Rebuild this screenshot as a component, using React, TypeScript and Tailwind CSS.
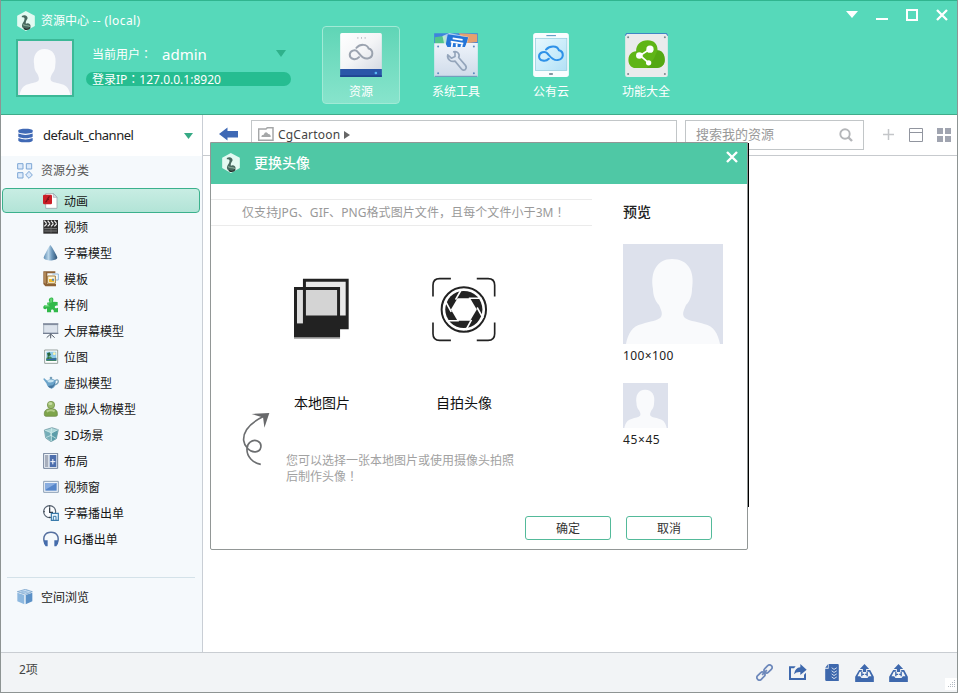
import React from "react";

type IconProps = { className?: string };

const CLOUD = "M139 98C150 86 171 85 176 100C191 104 192 127 173 130C158 133 151 119 143 110C136 101 119 106 119 119C119 133 138 136 147 126";

function Silhouette({ className }: IconProps) {
  return (
    <svg viewBox="0 0 100 100" className={className}>
      <rect width="100" height="100" fill="#dde1ec" />
      <path fill="#f9fafc" d="M3 100C5 90 9 82 19 80C27 77 35 77 38 73C40 69 38 66 36 61C32 57 30 51 30 45C27 28 34 15 49 15C65 15 72 27 69 45C69 51 67 57 63 61C61 66 59 69 61 73C64 77 73 77 81 80C91 82 95 90 97 100Z" />
    </svg>
  );
}

function Logo({ className }: IconProps) {
  return (
    <svg viewBox="0 0 57 60" className={className}>
      <path fill="#e3faf2" d="M28 0L55 14V45L28 60L2 45V14Z" />
      <path fill="#47695f" d="M16 15C23 10 35 13 33 23C29 28 27 32 28 38C34 34 44 38 42 47C39 56 22 57 17 48C14 38 24 33 24 24C25 20 21 19 16 19Z" />
      <path d="M20 40C25 47 33 41 40 47" stroke="#7fa391" strokeWidth="4" fill="none" />
      <path d="M22 52C30 57 37 55 41 49" stroke="#26312f" strokeWidth="4" fill="none" />
    </svg>
  );
}

/** Full-width punctuation centred in its cell. */
function Mark({ children }: { children: string }) {
  return <span className="font-['Noto_Sans_CJK_TC',sans-serif] leading-[0]">{children}</span>;
}

function DriveIcon() {
  return (
    <svg viewBox="90 53 126 133" className="h-[44px] w-[42px]">
      <defs><linearGradient id="drive" x2="1" y2="1"><stop stopColor="#fff" /><stop offset=".5" stopColor="#f4f5f7" /><stop offset="1" stopColor="#d5dae2" /></linearGradient></defs>
      <rect x="90" y="53" width="126" height="112" rx="5" fill="url(#drive)" />
      <path fill="#2a56a8" d="M90 162H216V183Q216 186 212 186H94Q90 186 90 183Z" />
      <path fill="#1f4591" d="M90 181H216V186H90Z" />
      <path d={CLOUD} stroke="#9ba3af" strokeWidth="6" fill="none" strokeLinecap="round" />
      <circle cx="198" cy="174" r="4" fill="#59b9f6" />
      <path d="M142 68h3m8 0h3m8 0h3" stroke="#8b9099" strokeWidth="3" />
    </svg>
  );
}

function ToolsIcon() {
  return (
    <svg viewBox="372 53 132 133" className="h-[44px] w-[44px]">
      <defs><linearGradient id="tool" x2="0" y2="1"><stop stopColor="#eef3fa" /><stop offset="1" stopColor="#cfdbea" /></linearGradient></defs>
      <path fill="#3f83dd" d="M372 54H504V95H372Z" />
      <path fill="#53c58c" d="M374 66L406 61L412 90H374Z" />
      <path fill="#e6a06f" d="M446 54L502 57V80L470 84Z" />
      <path fill="#fff" d="M397 62L418 53L476 65L468 99H405Z" opacity=".6" />
      <path fill="#2475d8" d="M413 57L475 66L466 98H405Z" />
      <path d="M428 69L458 74M422 79L460 85M425 96L427 81M440 97V83M454 98L456 86" stroke="#fff" strokeWidth="5.500" />
      <path fill="url(#tool)" d="M372 84H406L412 95H465L470 83H504V183Q504 186 501 186H375Q372 186 372 183Z" />
      <path d="M374 184H502" stroke="#5f91b2" strokeWidth="3" />
      <path d="M431 110C442 107 451 117 446 127L466 150C474 161 462 171 454 161L435 138C423 142 410 132 413 119L424 129L435 124V112Z" fill="none" stroke="#94a5bb" strokeWidth="5" strokeLinejoin="round" />
      <g fill="#5b8bbd"><circle cx="384" cy="94" r="3" /><circle cx="492" cy="94" r="3" /><circle cx="384" cy="175" r="3" /><circle cx="492" cy="175" r="3" /></g>
    </svg>
  );
}

function TabletIcon() {
  return (
    <svg viewBox="69 53 108 133" className="h-[44px] w-[36px]">
      <defs><linearGradient id="tablet" x2="1" y2="1"><stop stopColor="#e8f8fe" /><stop offset=".6" stopColor="#c7ebfa" /><stop offset="1" stopColor="#b2e0f6" /></linearGradient></defs>
      <rect x="69" y="53" width="108" height="133" rx="8" fill="#fafdff" />
      <rect x="76" y="69" width="95" height="97" fill="url(#tablet)" stroke="#8ac8da" strokeWidth="2" />
      <path d="M109 61H138" stroke="#4c90bd" strokeWidth="3" />
      <rect x="117" y="174" width="12" height="6" rx="2" fill="#8297a2" />
      <path transform="translate(-38 6) scale(1.05 .99)" d={CLOUD} stroke="#2f92e8" strokeWidth="6" fill="none" strokeLinecap="round" />
    </svg>
  );
}

function FunctionsIcon() {
  return (
    <svg viewBox="345 53 129 133" className="h-[44px] w-[43px]">
      <rect x="345" y="55" width="129" height="131" rx="6" fill="#eaebec" />
      <path d="M346 61Q346 54 353 54H466Q473 54 473 61" stroke="#3272c5" strokeWidth="3" fill="none" />
      <path fill="#5fb516" d="M377 159C361 158 354 146 355 132C356 118 364 110 378 108C378 88 392 75 413 75C433 75 443 87 443 105C456 105 465 117 465 134C465 149 456 158 442 159Z" />
      <path fill="#47980a" opacity=".45" d="M443 105C456 105 465 117 465 134C465 149 456 158 442 159H410L432 130Z" />
      <path d="M419 102L390 121L416 143" stroke="#fff" strokeWidth="5" fill="none" />
      <g fill="#fff"><circle cx="420" cy="102" r="11" /><circle cx="388" cy="121" r="10" /><circle cx="416" cy="143" r="8" /></g>
      <g fill="#7a858c"><circle cx="354" cy="66" r="3" /><circle cx="465" cy="66" r="3" /><circle cx="354" cy="177" r="3" /><circle cx="465" cy="177" r="3" /></g>
    </svg>
  );
}

const icons: Record<string, React.ReactNode> = {
  flash: (
    <>
      <path fill="#fff" stroke="#9aa8ae" strokeWidth="2.500" d="M8 2H32L42 12V46H8Z" />
      <path fill="#dbe2e6" stroke="#9aa8ae" strokeWidth="2" d="M31 2V13H42Z" />
      <rect y="5" width="27" height="29" rx="4" fill="#cb1e26" />
      <path d="M20 11C13 11 14 27 7 27M11 19H18" stroke="#7b1218" strokeWidth="4" fill="none" />
    </>
  ),
  video: (
    <>
      <path fill="#303030" d="M1 3H45V44H1Z" />
      <path d="M4 5L11 14M14 5L21 14M24 5L31 14M34 5L41 14M11 15L4 22M21 15L14 22M31 15L24 22M41 15L34 22" stroke="#f0f0f0" strokeWidth="3.500" />
      <path d="M4 29H42M4 36H42" stroke="#a3a3a3" strokeWidth="2" />
      <path d="M24 24V41" stroke="#777" strokeWidth="2" />
    </>
  ),
  cone: (
    <>
      <defs><linearGradient id="cone"><stop stopColor="#5e8db4" /><stop offset=".35" stopColor="#b9d5e8" /><stop offset=".6" stopColor="#6c98bc" /><stop offset="1" stopColor="#2e5274" /></linearGradient></defs>
      <path fill="url(#cone)" d="M22 0C25 2 43 34 43 38C40 49 5 49 2 38C2 34 19 2 22 0Z" />
    </>
  ),
  template: (
    <>
      <path fill="#8c6237" d="M1 1H37V7H13V39H39V46H7L1 39Z" />
      <path fill="#c39a66" d="M4 4H8V38L4 35Z" />
      <path fill="#fff7db" stroke="#a57d39" strokeWidth="3" d="M14 15H37V37H14Z" />
      <path fill="#f0bb2d" d="M18 24H33V33H18Z" />
      <path fill="none" stroke="#91b7d8" strokeWidth="3" d="M28 9H46V27H39" />
      <path fill="#5588bd" d="M27 23h6v6h-6z" />
    </>
  ),
  puzzle: (
    <>
      <path fill="#31b94a" d="M18 12C14 0 33 -3 31 9L30 14L44 15V26C35 22 32 34 40 34L45 32V46H32C35 37 24 35 24 42L25 46H12V34C4 42 -3 31 3 26C7 23 11 27 14 26L12 17L20 16Z" />
      <path fill="#7fe28b" opacity=".65" d="M21 6Q25 1 28 6L27 16L16 20L20 29Q15 28 4 30Q12 22 17 25L14 19L22 17Z" />
    </>
  ),
  screen: (
    <>
      <path fill="#dce3ec" stroke="#8490a0" strokeWidth="2" d="M2 5H44V31H2Z" />
      <path fill="#747f92" d="M0 1H46V5H0ZM0 29H46V33H0Z" />
      <path d="M23 32V46M22 34L11 44M24 34L35 44" stroke="#535d6a" strokeWidth="3" />
    </>
  ),
  image: (
    <>
      <path fill="#fff" stroke="#84928b" strokeWidth="2.500" d="M5 3H44V43H5Z" />
      <path fill="#8fcae8" d="M10 8H40V36H10Z" />
      <path fill="#479053" d="M10 27L21 22L29 28L40 26V36H10Z" />
      <path fill="#3569a5" d="M10 30L40 27V34H10Z" />
      <path fill="#28653b" d="M12 13L20 10L24 18L17 22V30H14V20Z" />
      <circle cx="34" cy="14" r="4" fill="#fff5ae" />
    </>
  ),
  teapot: (
    <>
      <path fill="none" stroke="#7ba2b8" strokeWidth="4" d="M36 17C48 8 51 26 34 30" />
      <path fill="#6ba4ca" d="M13 17C20 10 32 10 38 17C37 31 36 38 25 41C16 38 13 34 10 25L1 13L3 9L9 14Z" />
      <path fill="#c6e4f1" d="M13 18Q23 10 34 17Q30 24 16 22Z" />
      <path fill="#46769e" d="M30 31Q36 24 37 19Q37 32 26 40Q17 38 15 33Z" />
      <circle cx="24" cy="9" r="4" fill="#779fb8" />
    </>
  ),
  person: (
    <>
      <path fill="#7da44b" stroke="#617f3a" strokeWidth="2" d="M4 37C4 27 13 23 24 23C35 23 43 27 43 37V43Q42 46 38 46H8Q4 45 4 41Z" />
      <circle cx="24" cy="12" r="11" fill="#98ba6a" stroke="#69863e" strokeWidth="2" />
      <path d="M11 32Q23 24 35 31" stroke="#b3cc8a" strokeWidth="6" fill="none" />
      <ellipse cx="22" cy="8" rx="6" ry="4" fill="#c7dda4" />
    </>
  ),
  scene: (
    <>
      <path fill="#add8da" stroke="#5b8994" strokeWidth="2" d="M4 9L27 2L46 8L40 35L24 44L8 33Z" />
      <path fill="#5b9da9" d="M26 18L45 8L40 35L25 43Z" />
      <path fill="#75aeb8" d="M5 10L25 18V42L9 32Z" />
      <path d="M5 9L26 18L45 8M25 18V43M8 32L24 25L39 34M26 3L23 25" stroke="#d9f1f0" strokeWidth="2" fill="none" />
    </>
  ),
  layout: (
    <>
      <path fill="#eff5fa" stroke="#546784" strokeWidth="2.500" d="M2 1H44V46H2Z" />
      <path fill="#a7afbd" d="M6 6H16V42H6Z" />
      <path fill="#4d6fad" d="M20 6H40V42H20Z" />
      <path d="M22 26H37M29.500 18V34" stroke="#fff" strokeWidth="3" />
    </>
  ),
  window: (
    <>
      <path fill="#eef4fa" stroke="#8ca0b6" strokeWidth="3" d="M2 7H46V40H2Z" />
      <path fill="#5586ca" d="M7 12H41V35H7Z" />
      <path fill="#88ade0" d="M7 12H41L7 32Z" />
    </>
  ),
  clock: (
    <>
      <circle cx="20" cy="20" r="18" fill="#fbfdff" stroke="#566270" strokeWidth="3.500" />
      <path d="M20 7V22H30M20 2V5M2 20H5M20 38V35" stroke="#28323c" strokeWidth="3.500" fill="none" />
      <path fill="#e8f4fc" stroke="#397bac" strokeWidth="3.500" d="M25 25H46V46H25Z" />
      <path fill="none" stroke="#397bac" strokeWidth="3" d="M31 45V34H39V45" />
    </>
  ),
  phones: (
    <>
      <path fill="none" stroke="#56709f" strokeWidth="4.500" d="M5 36C-2 18 6 4 24 4C42 4 50 18 43 36" />
      <path fill="#456dac" d="M3 28H14V46H8L3 38ZM45 28H34V46H40L45 38Z" />
    </>
  ),
};

const items: [string, string][] = [
  ["flash", "动画"], ["video", "视频"], ["cone", "字幕模型"], ["template", "模板"],
  ["puzzle", "样例"], ["screen", "大屏幕模型"], ["image", "位图"], ["teapot", "虚拟模型"],
  ["person", "虚拟人物模型"], ["scene", "3D场景"], ["layout", "布局"], ["window", "视频窗"],
  ["clock", "字幕播出单"], ["phones", "HG播出单"],
];

function NavButton({ label, active, children }: { label: string; active?: boolean; children: React.ReactNode }) {
  return (
    <button className={`flex h-[78px] w-[78px] flex-col items-center rounded-[4px] border pt-[6px] ${active ? "border-[#a1ead6] bg-linear-to-b from-[#5fd5b6] to-[#87e4cc]" : "border-transparent"}`}>
      {children}
      <span className="mt-[7px] leading-[16px] text-white">{label}</span>
    </button>
  );
}

function Header() {
  return (
    <header className="flex h-[115px] shrink-0 border-t border-b border-t-[#30b58f] border-b-[#3fac8a] bg-[#56d9ba] text-white">
      <div className="flex w-[321px] shrink-0 flex-col pl-[15px]">
        <div className="mt-[9px] flex h-[21px] items-center">
          <Logo className="h-[20px] w-[20px]" />
          <span className="ml-[5px] leading-[20px]">资源中心<span className="tracking-[0.4px]"> -- (local)</span></span>
        </div>
        <div className="mt-[8px] flex">
          <Silhouette className="h-[58px] w-[58px] border-2 border-[#3cb897]" />
          <div className="ml-[12px] flex w-[205px] flex-col">
            <div className="flex h-[31px] items-center pl-[6px]">
              <span className="pt-px">当前用户<Mark>：</Mark></span>
              <span className="ml-[10px] text-[15px]">admin</span>
              <svg viewBox="0 0 10 7" className="mr-[5px] mb-[2px] ml-auto h-[7px] w-[10px]"><path fill="#2fb18b" d="M0 0H10L5 7Z" /></svg>
            </div>
            <div className="mt-[2px] h-[14px] rounded-full bg-[#26bd91] pl-[6px] leading-[15px]">登录IP<Mark>：</Mark>127.0.0.1:8920</div>
          </div>
        </div>
      </div>
      <nav className="mt-[25px] flex gap-[17px]">
        <NavButton label="资源" active><DriveIcon /></NavButton>
        <NavButton label="系统工具"><ToolsIcon /></NavButton>
        <NavButton label="公有云"><TabletIcon /></NavButton>
        <NavButton label="功能大全"><FunctionsIcon /></NavButton>
      </nav>
      <div className="mt-[8px] mr-[9px] ml-auto flex h-[13px] gap-[18px]">
        <svg viewBox="0 0 12 13" className="h-[13px] w-[12px]"><path fill="#fff" d="M0 2H12L6 9Z" /></svg>
        <svg viewBox="0 0 12 13" className="h-[13px] w-[12px]"><path fill="#fff" d="M0 9H12V11H0Z" /></svg>
        <svg viewBox="0 0 12 13" className="h-[13px] w-[12px]"><path fill="none" stroke="#fff" strokeWidth="2" d="M1 1H11V11H1Z" /></svg>
        <svg viewBox="0 0 12 13" className="h-[13px] w-[12px]"><path fill="none" stroke="#fff" strokeWidth="2.300" d="M1 1L11 11M11 1L1 11" /></svg>
      </div>
    </header>
  );
}

function Sidebar() {
  return (
    <aside className="flex w-[202px] shrink-0 flex-col border-r border-[#c9ced5] bg-[#f5f9fc]">
      <div className="flex h-[41px] items-center bg-white pr-[9px] pl-[17px]">
        <svg viewBox="0 0 46 44" className="h-[15px] w-[15px]" fill="#4069b5">
          <path d="M1 7C1 -1 45 -1 45 7V12C36 18 10 18 1 12Z" />
          <path d="M1 16Q23 25 45 16V26C36 32 10 32 1 26Z" />
          <path d="M1 30Q23 39 45 30V37C44 45 2 45 1 37Z" />
        </svg>
        <span className="ml-[10px] text-[13px] tracking-[-0.45px] text-[#222]">default_channel</span>
        <svg viewBox="0 0 9 6" className="ml-auto h-[6px] w-[9px]"><path fill="#36aa85" d="M0 0H9L4.500 6Z" /></svg>
      </div>
      <div className="flex h-[29px] items-center pl-[16px]">
        <svg viewBox="0 0 48 48" className="h-[16px] w-[16px]" fill="#dceafa" stroke="#7da6d5" strokeWidth="3">
          <path d="M2 2H18V18H2ZM28 2H44V18H28ZM2 29H18V45H2ZM36 25L46 36L36 46L26 36Z" />
        </svg>
        <span className="ml-[8px] text-[#555]">资源分类</span>
      </div>
      <ul className="mt-[3px]">
        {items.map(([icon, label], i) => (
          <li key={icon} className={`mr-[2px] mb-[1px] ml-[1px] flex h-[25px] items-center rounded-[4px] border pl-[40px] ${i === 0 ? "border-[#3bb18c] bg-linear-to-b from-[#c8ede3] to-[#b2e4d7]" : "border-transparent"}`}>
            <svg viewBox="0 0 48 48" className="h-[16px] w-[16px]">{icons[icon]}</svg>
            <span className="ml-[5px] pt-[2px] text-[#161616]">{label}</span>
          </li>
        ))}
      </ul>
      <div className="mt-[25px] mr-[7px] ml-[6px] h-px bg-[#d4e2e9]" />
      <div className="mt-[8px] flex h-[22px] items-center pl-[16px]">
        <svg viewBox="0 0 48 48" className="h-[16px] w-[16px]">
          <path fill="#c8dff3" stroke="#6796c3" strokeWidth="2" d="M1 8L25 1L46 8L26 16Z" />
          <path fill="#8db8df" d="M1 11L22 18V46L1 37Z" />
          <path fill="#5b91c7" d="M46 11L26 18V46L46 37Z" />
          <path d="M12 6L36 13M36 4L12 12" stroke="#8db4da" strokeWidth="2" />
        </svg>
        <span className="ml-[8px] pt-[2px] text-[#222]">空间浏览</span>
      </div>
    </aside>
  );
}

function Toolbar() {
  return (
    <div className="flex h-[41px] border-b border-[#c7cace] pt-[5px]">
      <svg viewBox="0 0 56 40" className="mt-[7px] ml-[16px] h-[14px] w-[19px]"><path fill="#3f69b5" d="M0 20L25 1V11H56V30H25V39Z" /></svg>
      <div className="ml-[13px] flex h-[30px] w-[426px] items-center border border-[#c2c6c8] pl-[6px]">
        <svg viewBox="0 0 48 42" className="mb-[2px] h-[14px] w-[16px]">
          <path fill="none" stroke="#a5a7a8" strokeWidth="4.500" d="M2 6H24L28 2H45V40H2Z" />
          <path fill="#a5a7a8" d="M10 30Q10 23 17 23Q23 10 31 21Q39 22 38 30Z" />
        </svg>
        <span className="ml-[4px] text-[12px] tracking-[0.2px] text-[#444]">CgCartoon</span>
        <svg viewBox="0 0 6 8" className="ml-[4px] h-[8px] w-[6px]"><path fill="#666" d="M0 0L6 4L0 8Z" /></svg>
      </div>
      <div className="ml-[8px] flex h-[30px] w-[179px] items-center justify-between border border-[#c2c6c8] pr-[10px] pl-[10px]">
        <span className="text-[13px] text-[#999]">搜索我的资源</span>
        <svg viewBox="0 0 14 14" className="mb-px h-[14px] w-[14px]" fill="none" stroke="#b4b6b9"><circle cx="6" cy="6" r="4.700" strokeWidth="1.900" /><path d="M9.500 9.500L13 13" strokeWidth="2.400" /></svg>
      </div>
      <svg viewBox="0 0 11 11" className="mt-[9px] ml-[19px] h-[11px] w-[11px]"><path d="M5.500 0V11M0 5.500H11" stroke="#c4c6c9" strokeWidth="1.500" /></svg>
      <svg viewBox="0 0 14 14" className="mt-[8px] ml-[15px] h-[14px] w-[14px]"><path fill="none" stroke="#91959f" d="M.5.5H13.500V13.500H.5ZM1 4.500H13" /></svg>
      <svg viewBox="0 0 14 14" className="mt-[8px] ml-[14px] h-[14px] w-[14px]"><path fill="#a0a4b0" d="M0 0H6V6H0ZM8 0H14V6H8ZM0 8H6V14H0ZM8 8H14V14H8Z" /></svg>
    </div>
  );
}

function PhotosIcon() {
  return (
    <svg viewBox="192 56 166 182" className="mr-px mb-[2px] h-[61px] w-[55px]">
      <path fill="#222" d="M219 57H357V210H219Z" />
      <path fill="#e9e9e9" d="M228 66H348V168H228Z" />
      <path fill="#999" d="M192 234H331V238H192Z" />
      <path fill="#222" d="M192 82H331V234H192Z" />
      <path fill="#dedede" d="M201 91H219V192H201Z" />
      <path fill="#d4d4d4" d="M228 91H322V168H228Z" />
    </svg>
  );
}

function ApertureIcon() {
  return (
    <svg viewBox="606 50 193 194" className="h-[65px] w-[64px]">
      <g fill="none" stroke="#222" strokeWidth="5">
        <path d="M609 108V74Q609 54 629 54H663M741 54H775Q795 54 795 74V108M795 186V220Q795 240 775 240H741M663 240H629Q609 240 609 220V186" />
        <circle cx="702" cy="147" r="67" strokeWidth="6" />
      </g>
      <circle cx="702" cy="147" r="56" fill="#222" />
      <path fill="#fff" d="M683 113H721L741 147L721 181H683L663 147Z" />
      <path d="M677 117L695 86M717 113H755M742 141L760 173M725 178L708 209M687 181H649M664 154L646 121" stroke="#fff" strokeWidth="5" />
    </svg>
  );
}

function Dialog() {
  return (
    <section className="absolute top-[142px] left-[210px] flex h-[408px] w-[538px] flex-col rounded-b-[2px] border border-[#929796] bg-white">
      <div className="absolute top-0 -right-[2px] h-[364px] w-px bg-black" />
      <div className="flex h-[41px] shrink-0 items-start bg-[#4fc8a5] pl-[10px]">
        <Logo className="mt-[10px] h-[20px] w-[20px]" />
        <span className="mt-[9px] ml-[13px] text-[14px] leading-[22px] font-medium text-white">更换头像</span>
        <svg viewBox="0 0 12 12" className="mt-[8px] mr-[9px] ml-auto h-[12px] w-[12px]"><path stroke="#fff" strokeWidth="2.400" d="M1 1L11 11M11 1L1 11" /></svg>
      </div>
      <div className="flex h-[324px]">
        <div className="flex w-[381px] flex-col">
          <div className="mt-[15px] flex h-[27px] items-center border-y border-[#ebebeb] pl-[31px] tracking-[0.08px] text-[#999]"><span>仅支持JPG、GIF、PNG格式图片文件，且每个文件小于3M<Mark>！</Mark></span></div>
          <div className="mt-[51px] ml-[40px] flex">
            <div className="flex w-[142px] flex-col items-center"><div className="flex h-[65px] items-center"><PhotosIcon /></div><span className="mt-[50px] text-[14px] leading-[22px] text-[#111]">本地图片</span></div>
            <div className="flex w-[142px] flex-col items-center"><ApertureIcon /><span className="mt-[50px] text-[14px] leading-[22px] text-[#111]">自拍头像</span></div>
          </div>
          <div className="flex">
            <svg viewBox="35 457 85 162" className="mt-[-2px] ml-[31px] h-[54px] w-[28px]">
              <path d="M92 615C67 611 50 591 50 570C49 551 66 538 82 544C99 552 94 576 76 577C58 579 42 560 40 542C38 512 64 487 101 469" fill="none" stroke="#6c6e70" strokeWidth="5" />
              <path fill="#68696b" d="M64 462L118 459L103 504L99 473Z" />
            </svg>
            <p className="mt-[39px] ml-[16px] w-[240px] leading-[16px] text-[#a2a2a2]">您可以选择一张本地图片或使用摄像头拍照<br />后制作头像<Mark>！</Mark></p>
          </div>
        </div>
        <div className="flex flex-1 flex-col pl-[31px] text-[#222]">
          <h2 className="mt-[18px] text-[14px] leading-[20px] font-medium">预览</h2>
          <Silhouette className="mt-[22px] h-[100px] w-[100px]" />
          <span className="mt-[3px] leading-[18px] tracking-[0.4px]">100×100</span>
          <Silhouette className="mt-[18px] h-[45px] w-[45px]" />
          <span className="mt-[3px] leading-[18px] tracking-[0.6px]">45×45</span>
        </div>
      </div>
      <div className="mt-[8px] flex gap-[15px] pl-[314px] text-[#333]">
        <button className="h-[24px] w-[86px] rounded-[3px] border border-[#53ba9a] pt-[2px]">确定</button>
        <button className="h-[24px] w-[86px] rounded-[3px] border border-[#53ba9a] pt-[2px]">取消</button>
      </div>
    </section>
  );
}

function Upload() {
  return (
    <svg viewBox="0 0 56 54" className="h-[18px] w-[19px]">
      <path fill="#3e68ad" d="M28 0L42 15H33V24H23V15H14Z" />
      <path fill="#3e68ad" d="M12 18H20V23H14L7 37H15L19 42H37L41 37H49L42 23H36V18H45L56 38V54H0V38Z" />
      <path d="M20 24V37M20 31H27M36 24V37M30 31H36" stroke="#3e68ad" strokeWidth="4" />
    </svg>
  );
}

function Footer() {
  return (
    <footer className="flex h-[40px] shrink-0 items-center border-t border-[#c9cdd2] bg-[#f2f4f6]">
      <span className="mb-[5px] ml-[18px] text-[#444]">2项</span>
      <div className="mt-[2px] ml-auto flex h-[19px] gap-[15px]">
        <svg viewBox="0 0 50 50" className="h-[17px] w-[17px]" fill="none" stroke="#6d88bb" strokeWidth="5">
          <rect x="22" y="7" width="27" height="15" rx="7.500" transform="rotate(-45 35.500 14.500)" />
          <rect x="1" y="28" width="27" height="15" rx="7.500" transform="rotate(-45 14.500 35.500)" />
          <path d="M18 32L32 18" />
        </svg>
        <svg viewBox="0 0 54 54" className="ml-[1px] h-[18px] w-[18px]" fill="#3e68ad">
          <path d="M0 7H20L15 13H6V42H45V32L51 26V48H0Z" />
          <path d="M34 0L53 17L34 33V24Q22 23 15 31Q18 11 34 10Z" />
        </svg>
        <svg viewBox="0 0 40 50" className="ml-[3px] h-[17px] w-[14px]">
          <path fill="#3e68ad" d="M10 0H37Q40 0 40 3V50H4Q0 50 0 46V14H10ZM0 11L8 1V11Z" />
          <path d="M19 11L26 16L34 11M19 20L26 25L34 20M19 29L26 34L34 29M19 38L26 43L34 38" stroke="#e7edf5" strokeWidth="2.500" fill="none" />
        </svg>
        <div className="ml-[1px]"><Upload /></div>
        <Upload />
      </div>
      <div className="mt-[22px] ml-[37px] h-[12px] w-[12px] bg-white p-[2px]">
        <svg viewBox="0 0 9 9" className="h-[9px] w-[9px]" fill="#b3bac2">
          <path d="M7 0h1v1h-1zM5 2h1v1h-1zM7 2h1v1h-1zM3 4h1v1h-1zM5 4h1v1h-1zM7 4h1v1h-1zM1 6h1v1h-1zM3 6h1v1h-1zM5 6h1v1h-1zM7 6h1v1h-1z" />
        </svg>
      </div>
    </footer>
  );
}

export default function App() {
  return (
    <div className="relative flex h-[693px] w-[958px] flex-col overflow-hidden border-x border-b border-[#8e9493] bg-white font-['Noto_Sans','Noto_Sans_CJK_SC',sans-serif] text-[12px] whitespace-nowrap">
      <Header />
      <div className="flex min-h-0 flex-1">
        <Sidebar />
        <main className="min-w-0 flex-1"><Toolbar /></main>
      </div>
      <Footer />
      <div className="absolute top-0 -left-px"><Dialog /></div>
    </div>
  );
}
